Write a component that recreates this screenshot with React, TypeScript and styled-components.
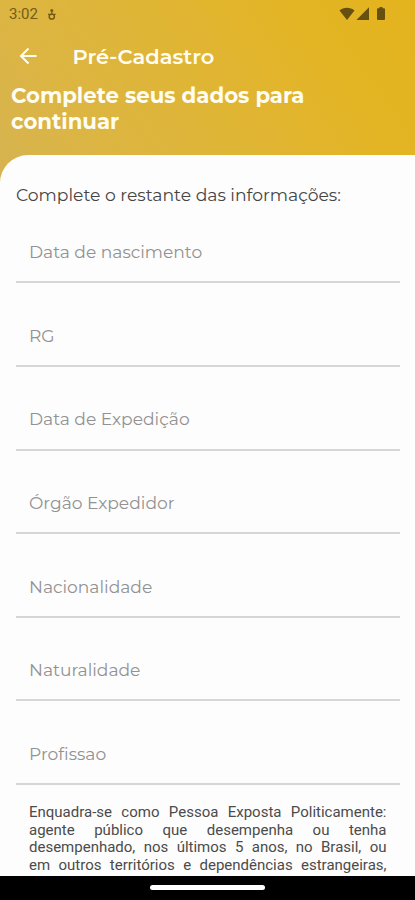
import React from 'react';
import styled, { createGlobalStyle } from 'styled-components';

const GlobalStyle = createGlobalStyle`
  * { box-sizing: border-box; }
  body { margin: 0; background: #000; }
`;

const Screen = styled.div`
  display: flex;
  flex-direction: column;
  width: 415px;
  height: 900px;
  overflow: hidden;
  font-family: Montserrat, Inter, sans-serif;
  font-variant-ligatures: none;
  background: linear-gradient(55deg, #d5b352 0, #dcb543 110px, #e0b534 240px, #e3b424 350px, #e4b41e 100%) 0 0 / 100% 200px no-repeat #fdfdfd;
`;

const StatusBar = styled.div`
  display: flex;
  align-items: center;
  height: 28px;
  padding: 0 28px 0 9px;
  color: #745c17;
  font: 400 15px/28px Roboto, sans-serif;
`;

const Clock = styled.span`
  width: 38px;
`;

const StatusIcons = styled.div`
  display: flex;
  margin-left: auto;
`;

const AppBar = styled.div`
  display: flex;
  align-items: center;
  height: 55px;
  padding-left: 19px;
`;

const BackButton = styled.button`
  display: flex;
  width: 53.5px;
  padding: 0;
  border: 0;
  background: none;
`;

const Title = styled.h1`
  margin: 2px 0 0;
  color: #fffdf2;
  font-size: 21px;
  line-height: 28px;
  font-weight: 600;
  white-space: nowrap;
`;

const Heading = styled.h2`
  height: 72px;
  margin: 0;
  padding-left: 11px;
  color: #fffdf2;
  font-size: 21.25px;
  line-height: 25.5px;
  font-weight: 700;
`;

const Line = styled.span`
  display: block;
  white-space: nowrap;
`;

const Sheet = styled.main`
  flex: 1;
  min-height: 0;
  overflow: hidden;
  padding: 28px 15.5px 0 16px;
  border-top-left-radius: 28px;
  background: #fdfdfd;
`;

const Intro = styled.p`
  margin: 0;
  height: 16.9px;
  color: #454545;
  font-size: 17.2px;
  line-height: 24px;
  white-space: nowrap;
`;

const Field = styled.div`
  display: flex;
  align-items: flex-end;
  height: 83.6px;
  padding: 0 0 17.2px 13px;
  border-bottom: 2px solid #d6d6d6;
  color: #929292;
  font-size: 17.1px;
  line-height: 24px;
`;

const Notice = styled.p`
  margin: 18.8px 13px 0;
  color: #4b4b4b;
  font: 400 15px/17.8px Roboto, sans-serif;
`;

const NoticeLine = styled.span`
  display: block;
  text-align: justify;
  text-align-last: justify;
  white-space: nowrap;
`;

const NavigationBar = styled.div`
  display: flex;
  justify-content: center;
  height: 24.5px;
  padding-top: 9.5px;
  background: #000;
`;

const HomeHandle = styled.div`
  width: 115px;
  height: 5px;
  border-radius: 3px;
  background: #fff;
`;

const fields = [
  'Data de nascimento',
  'RG',
  'Data de Expedição',
  'Órgão Expedidor',
  'Nacionalidade',
  'Naturalidade',
  'Profissao',
];

const notice = [
  'Enquadra-se como Pessoa Exposta Politicamente:',
  'agente público que desempenha ou tenha',
  'desempenhado, nos últimos 5 anos, no Brasil, ou',
  'em outros territórios e dependências estrangeiras,',
];

export default function App() {
  return (
    <>
      <GlobalStyle />
      <Screen>
        <StatusBar>
          <Clock>3:02</Clock>
          <svg width="10" height="13" viewBox="0 0 10 13" fill="none" stroke="#745c17">
            <circle cx="4.8" cy="8.5" r="2.6" strokeWidth="1.5" />
            <circle cx="4.8" cy="2.5" r="1.5" fill="#745c17" stroke="none" />
            <path d="M4.800 2.500v4.500M1 6.200l2.200.6M8.600 6.200l-2.200.6" strokeWidth="1.2" />
          </svg>
          <StatusIcons>
            <svg width="48" height="16" viewBox="0 0 48 16" fill="#66500f">
              <path d="M0.500 4.500C4.500 .8 11.300 .8 15.500 4.500L8 14z" />
              <path d="M30 1.200V14H17.400z" />
              <path d="M39 2.300h1.500V1h3v1.300H45q1 0 1 1V13q0 1-1 1h-6q-1 0-1-1V3.300q0-1 1-1z" />
            </svg>
          </StatusIcons>
        </StatusBar>
        <AppBar>
          <BackButton aria-label="Voltar">
            <svg width="19" height="18" viewBox="0 0 19 18" fill="none" stroke="#fffdf2" strokeWidth="2">
              <path d="M17.500 9H3M9.500 1.500L2 9l7.500 7.500" />
            </svg>
          </BackButton>
          <Title>Pré-Cadastro</Title>
        </AppBar>
        <Heading>
          <Line>Complete seus dados para</Line>
          <Line>continuar</Line>
        </Heading>
        <Sheet>
          <Intro>Complete o restante das informações:</Intro>
          {fields.map((label) => (
            <Field key={label}>{label}</Field>
          ))}
          <Notice>
            {notice.map((line) => (
              <NoticeLine key={line}>{line}</NoticeLine>
            ))}
          </Notice>
        </Sheet>
        <NavigationBar>
          <HomeHandle />
        </NavigationBar>
      </Screen>
    </>
  );
}
